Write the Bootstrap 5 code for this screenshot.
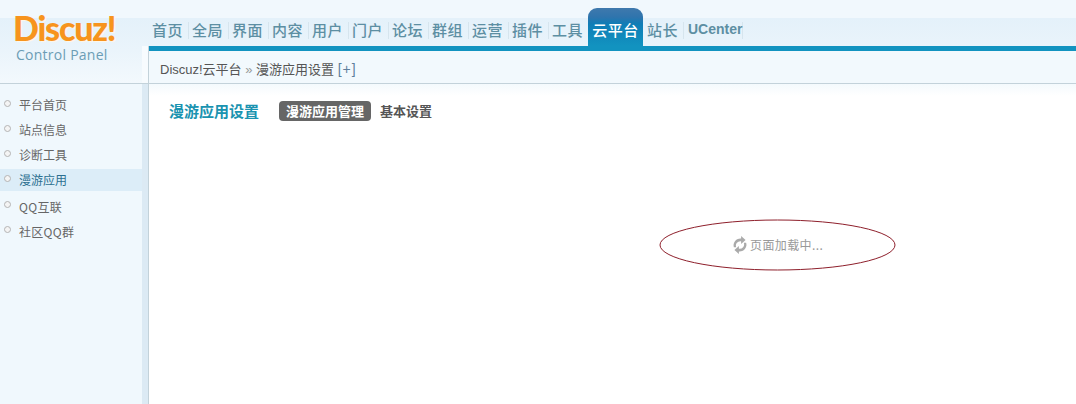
<!DOCTYPE html>
<html lang="zh-CN">

<head>
    <meta charset="UTF-8" />
    <meta name="viewport" content="width=device-width, initial-scale=1.0" />
    <title>Discuz! Control Panel</title>
    <link href="https://cdn.jsdelivr.net/npm/bootstrap@5.3.0/dist/css/bootstrap.min.css" rel="stylesheet" />
    <script src="https://cdn.jsdelivr.net/npm/bootstrap@5.3.0/dist/js/bootstrap.bundle.min.js"></script>
    <style>
        html, body { height: 404px; overflow: hidden; }
        body { background: #fff; font-family: "Liberation Sans", "Noto Sans CJK SC", sans-serif; font-size: 12px; color: #555; }
        .dz-head { height: 84px; background: linear-gradient(#f1f8fd 0, #f1f8fd 18px, #e4f1fa 18px, #eaf4fb 50px, #f3f9fd 84px); border-bottom: 1px solid #c3d2da; }
        .dz-logo { width: 148px; flex: none; padding: 12px 0 0 13px; background: linear-gradient(#f7fbfe, #f7fbfe) no-repeat 142px 46px / 6px 37px; }
        .dz-logo-main { font-family: Lato, "Open Sans", sans-serif; font-weight: 900; font-size: 34px; line-height: 31px; letter-spacing: -1.2px; color: #f7941d; text-shadow: 1px 1px 0 #fff6e8; }
        .dz-logo-sub { font-family: "Open Sans", sans-serif; font-size: 14px; line-height: 18px; margin: 3px 0 0 3px; color: #6b9db5; letter-spacing: .25px; }
        .dz-right { flex: 1; min-width: 0; border-left: 1px solid #c3d2da; margin-top: 46px; position: relative; background: #f2f9fd; }
        .dz-nav { position: absolute; left: 0; bottom: 100%; height: 38px; margin: 0 0 0 -1px; padding: 0 0 0 4px; list-style: none; white-space: nowrap; }
        .dz-nav li { height: 38px; line-height: 43px; font-family: "Noto Sans CJK SC", sans-serif; font-size: 15px; font-weight: 500; letter-spacing: .5px; color: #5d8fa3; }
        .dz-nav a { color: inherit; text-decoration: none; display: block; }
        .dz-nav .dz-item { width: 40px; background: linear-gradient(#d6e5ee, #d6e5ee) no-repeat 36px 14px / 1px 17px; }
        .dz-nav .dz-on { width: 55px; margin-right: 4px; margin-left: -4px; text-align: center; color: #fff; border-radius: 9px 9px 0 0; background: linear-gradient(#3f79ad, #2f74ad 9px, #0f7db6 16px, #1293c0); }
        .dz-nav .dz-uc { font-family: "Liberation Sans", sans-serif; font-size: 14px; font-weight: 700; letter-spacing: 0; padding-left: 1px; width: 59px; background: linear-gradient(#d6e5ee, #d6e5ee) no-repeat 55px 14px / 1px 17px; }
        .dz-crumb { height: 37px; border-top: 5px solid #1293c0; padding: 9px 0 0 11px; font-size: 13px; line-height: 18px; color: #555; }
        .dz-crumb i { font-style: normal; color: #999; }
        .dz-crumb b { font-weight: 400; font-size: 14px; color: #5d7f9c; letter-spacing: 1px; }
        .dz-side { width: 149px; flex: none; height: 320px; background: linear-gradient(90deg, #f0f8fd 142px, #dceaf4 142px, #dceaf4 148px, #c3d2da 148px); padding-top: 8px; }
        .dz-side ul { width: 142px; margin: 0; padding: 0; list-style: none; }
        .dz-side li { height: 25px; line-height: 25px; padding-left: 19px; position: relative; font-family: "Noto Sans CJK SC", sans-serif; font-size: 12px; color: #666; }
        .dz-side li::before { content: ""; position: absolute; left: 4px; top: 8px; width: 7px; height: 7px; border: 1px solid #b4b4b4; border-radius: 50%; background: #f4f4f4; }
        .dz-side li.dz-cur { background: #dcedf8; color: #2b6f90; height: 22px; margin: 2px 0 2px; line-height: 21px; }
        .dz-side li.dz-cur::before { top: 6px; }
        .dz-side li.dz-qq { padding-top: 1px; letter-spacing: .3px; }
        .dz-main { flex: 1; min-width: 0; position: relative; padding: 17px 0 0 20px; background: linear-gradient(#f4fafd, #fff 12px); }
        .dz-tabs { height: 20px; }
        .dz-title { font-family: "Noto Sans CJK SC", sans-serif; font-size: 15px; font-weight: 700; color: #1a93b0; width: 110px; line-height: 20px; }
        .dz-pill { font-family: "Noto Sans CJK SC", sans-serif; font-size: 13px; font-weight: 700; line-height: 20px; height: 20px; padding: 0 7px; border-radius: 4px; background: #666; color: #fff; }
        .dz-tab { font-family: "Noto Sans CJK SC", sans-serif; font-size: 13px; font-weight: 700; line-height: 20px; color: #555; margin-left: 9px; }
        .dz-loading { position: absolute; left: 510px; top: 135px; width: 237px; height: 52px; }
        .dz-loading svg.dz-oval { position: absolute; inset: 0; }
        .dz-load-text { position: absolute; left: 91px; top: 16px; line-height: 20px; font-family: "Noto Sans CJK SC", sans-serif; font-size: 12px; color: #999; letter-spacing: .4px; }
        .dz-spin { position: absolute; left: 72px; top: 16px; }
    </style>
</head>

<body>
    <header class="dz-head d-flex">
        <div class="dz-logo">
            <div class="dz-logo-main">Discuz!</div>
            <div class="dz-logo-sub">Control Panel</div>
        </div>
        <div class="dz-right">
            <ul class="dz-nav d-flex">
                <li class="dz-item"><a href="#">首页</a></li>
                <li class="dz-item"><a href="#">全局</a></li>
                <li class="dz-item"><a href="#">界面</a></li>
                <li class="dz-item"><a href="#">内容</a></li>
                <li class="dz-item"><a href="#">用户</a></li>
                <li class="dz-item"><a href="#">门户</a></li>
                <li class="dz-item"><a href="#">论坛</a></li>
                <li class="dz-item"><a href="#">群组</a></li>
                <li class="dz-item"><a href="#">运营</a></li>
                <li class="dz-item"><a href="#">插件</a></li>
                <li class="dz-item"><a href="#">工具</a></li>
                <li class="dz-on"><a href="#">云平台</a></li>
                <li class="dz-item"><a href="#">站长</a></li>
                <li class="dz-uc"><a href="#">UCenter</a></li>
            </ul>
            <div class="dz-crumb">Discuz!云平台 <i>»</i> 漫游应用设置 <b>[+]</b></div>
        </div>
    </header>
    <div class="d-flex">
        <nav class="dz-side">
            <ul>
                <li>平台首页</li>
                <li>站点信息</li>
                <li>诊断工具</li>
                <li class="dz-cur">漫游应用</li>
                <li class="dz-qq">QQ互联</li>
                <li class="dz-qq">社区QQ群</li>
            </ul>
        </nav>
        <main class="dz-main">
            <div class="dz-tabs d-flex">
                <div class="dz-title">漫游应用设置</div>
                <div class="dz-pill">漫游应用管理</div>
                <div class="dz-tab">基本设置</div>
            </div>
            <div class="dz-loading">
                <svg class="dz-oval" width="237" height="52" viewBox="0 0 237 52">
                    <ellipse cx="118.5" cy="26" rx="117.5" ry="25" fill="none" stroke="#8e1f2b" stroke-width="1" />
                </svg>
                <svg class="dz-spin" width="18" height="20" viewBox="0 0 16 18">
                    <path d="M2.5 11A6 6 0 0 1 9 3.2V1l4 3.6L9 8V5.6A4 4 0 0 0 4.6 11Z" fill="#aaa" />
                    <path d="M13.5 7A6 6 0 0 1 7 14.8V17L3 13.4 7 10v2.4A4 4 0 0 0 11.4 7Z" fill="#aaa" />
                </svg>
                <div class="dz-load-text">页面加载中...</div>
            </div>
        </main>
    </div>
</body>

</html>
